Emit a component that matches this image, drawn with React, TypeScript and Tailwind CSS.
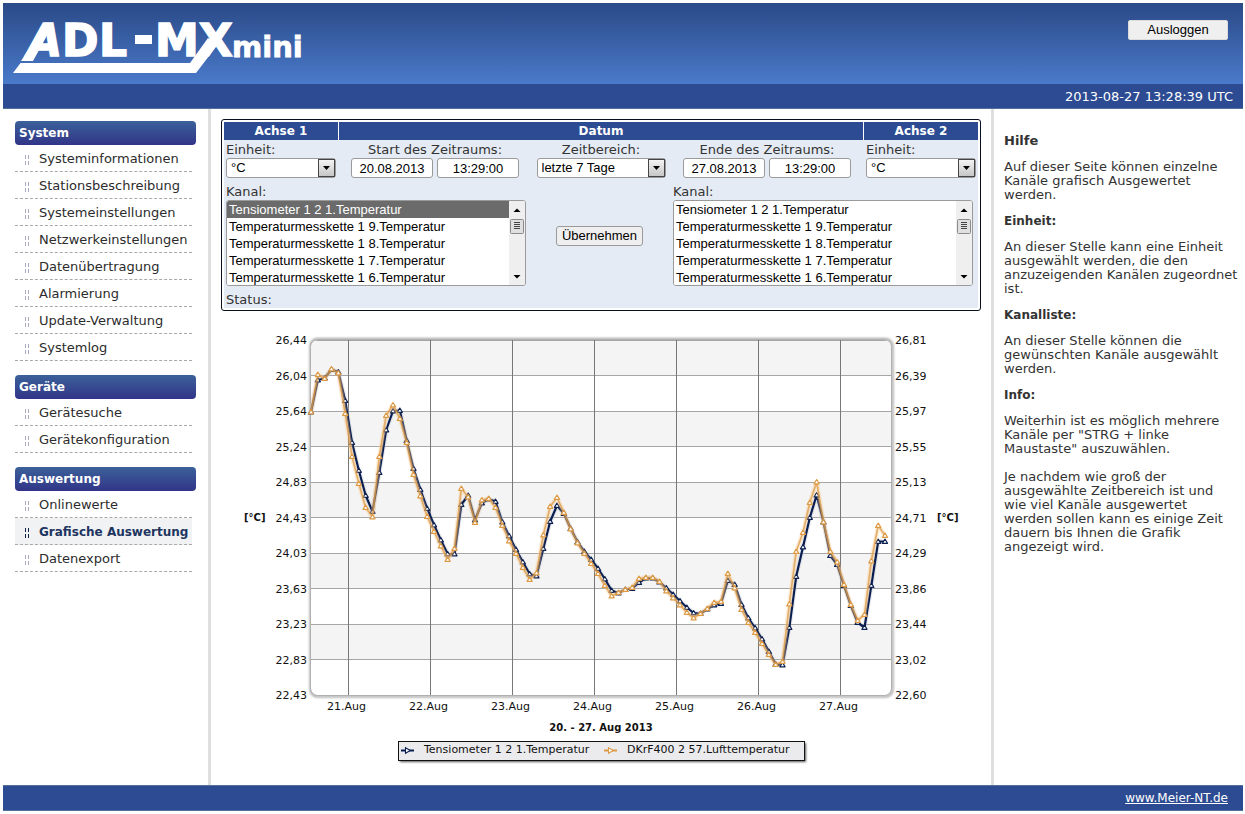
import React from "react";

const menu = [
  {
    title: "System",
    items: [
      "Systeminformationen",
      "Stationsbeschreibung",
      "Systemeinstellungen",
      "Netzwerkeinstellungen",
      "Datenübertragung",
      "Alarmierung",
      "Update-Verwaltung",
      "Systemlog",
    ],
  },
  { title: "Geräte", items: ["Gerätesuche", "Gerätekonfiguration"] },
  { title: "Auswertung", items: ["Onlinewerte", "Grafische Auswertung", "Datenexport"] },
];
const activeItem = "Grafische Auswertung";

const channels = [
  "Tensiometer 1 2 1.Temperatur",
  "Temperaturmesskette 1 9.Temperatur",
  "Temperaturmesskette 1 8.Temperatur",
  "Temperaturmesskette 1 7.Temperatur",
  "Temperaturmesskette 1 6.Temperatur",
];

const leftTicks = ["26,44", "26,04", "25,64", "25,24", "24,83", "24,43", "24,03", "23,63", "23,23", "22,83", "22,43"];
const rightTicks = ["26,81", "26,39", "25,97", "25,55", "25,13", "24,71", "24,29", "23,86", "23,44", "23,02", "22,60"];
const days = ["21.Aug", "22.Aug", "23.Aug", "24.Aug", "25.Aug", "26.Aug", "27.Aug"];

// One sample every two hours, as plot heights.
const tensiometer = [
  412, 380, 378, 369.5, 372, 400.5, 442.5, 470.5, 495.5, 511.5, 472.5, 430, 411, 410.5, 440.5, 468.5, 489.5, 508.5,
  525, 540, 554, 554, 504.5, 495.5, 520, 503, 499, 501.5, 522, 536, 549.5, 562, 574, 576, 548.5, 521.5, 505.5, 513.5,
  528.5, 542, 551.5, 559.5, 568.5, 579, 590.5, 593, 589.5, 588.5, 582.5, 578, 578, 582, 588, 594.5, 601, 607.5, 613,
  613.5, 609, 605, 603.5, 580.5, 584.5, 604.5, 618, 628, 639, 651.5, 664, 665, 627.5, 576.5, 547, 517.5, 495, 522,
  555.5, 564.5, 585.5, 605.5, 622.5, 627.5, 585.5, 541.5, 541.5,
];
const luft = [
  412, 374.5, 378.5, 369, 373, 413.5, 456.5, 483.5, 507.5, 517, 456.5, 415.5, 405, 418.5, 442.5, 474.5, 496, 516.5,
  531.5, 546, 559.5, 548.5, 488.5, 497, 522.5, 500, 498.5, 507.5, 525.5, 541, 553.5, 567.5, 579.5, 573, 535, 506.5,
  497.5, 512.5, 529, 543, 553.5, 563.5, 573.5, 585.5, 596, 592.5, 589.5, 587.5, 578.5, 577.5, 577.5, 581.5, 591, 598,
  605, 612.5, 618, 613.5, 608.5, 602.5, 601.5, 573.5, 588, 609.5, 622.5, 632.5, 643.5, 654.5, 664.5, 661.5, 604,
  551.5, 532.5, 502.5, 482, 522, 551.5, 562, 584.5, 604.5, 620.5, 614.5, 561, 525.5, 535.5,
];

const plotX = (i: number) => 311 + (i * 574) / 84;
const tickY = (i: number) => 340 + i * 35.5;

interface SeriesProps {
  values: number[];
  color: string;
  halo: string;
  width: number;
  opacity: number;
}

function Series({ values, color, halo, width, opacity }: SeriesProps) {
  const points = values.map((y, i) => `${plotX(i)},${y}`).join(" ");
  return (
    <g fill="none" strokeLinejoin="round">
      <polyline points={points} stroke={halo} strokeWidth="4.5" strokeOpacity="0.35" />
      <polyline points={points} stroke={color} strokeWidth={width} strokeOpacity={opacity} />
      {values.map((y, i) => (
        <path key={i} d={`M${plotX(i)} ${y - 2.5}l2.6 4.4h-5.2z`} fill="#fff" stroke={color} strokeWidth="1.1" />
      ))}
    </g>
  );
}

function Chart() {
  return (
    <svg viewBox="231 325 740 450" className="w-[740px] max-w-full" role="img" aria-label="20. - 27. Aug 2013" fontFamily="'DejaVu Sans', sans-serif" fontSize="11" fill="#111">
      <defs>
        <clipPath id="plot">
          <rect x="311" y="340" width="580" height="355" rx="7" />
        </clipPath>
        <filter id="soft" x="-5%" y="-20%" width="110%" height="140%">
          <feGaussianBlur stdDeviation="1.2" />
        </filter>
      </defs>
      <rect x="310.5" y="339" width="582" height="357.500" rx="7" fill="#fff" stroke="#9c9c9c" strokeWidth="2" filter="url(#soft)" />
      <g clipPath="url(#plot)">
        <rect x="311" y="340" width="580" height="355" fill="#fff" />
        {[0, 2, 4, 6, 8].map((i) => (
          <rect key={i} x="311" y={tickY(i)} width="580" height="35.5" fill="#f4f4f4" />
        ))}
        {leftTicks.map((t, i) => (
          <line key={t} x1="311" x2="891" y1={Math.floor(tickY(i)) + 0.5} y2={Math.floor(tickY(i)) + 0.5} stroke="#a6a6a6" />
        ))}
        {days.map((d, i) => (
          <line key={d} x1={348.5 + i * 82} x2={348.5 + i * 82} y1="340" y2="695" stroke="#777" />
        ))}
      </g>
      <rect x="310.5" y="339.5" width="581" height="356" rx="7" fill="none" stroke="#b0b0b0" />
      <Series values={tensiometer} color="#0b1e50" halo="#b9bfce" width={2.2} opacity={1} />
      <Series values={luft} color="#dc9a45" halo="#f8c98a" width={1.7} opacity={0.75} />
      {leftTicks.map((t, i) => (
        <text key={t} x="307" y={tickY(i) + 4} textAnchor="end">{t}</text>
      ))}
      {rightTicks.map((t, i) => (
        <text key={t} x="895" y={tickY(i) + 4}>{t}</text>
      ))}
      {days.map((d, i) => (
        <text key={d} x={346.5 + i * 82} y="710" textAnchor="middle">{d}</text>
      ))}
      <g fontWeight="700" fontSize="10">
        <text x="244" y="521">[°C]</text>
        <text x="937" y="521">[°C]</text>
        <text x="601" y="731" textAnchor="middle">20. - 27. Aug 2013</text>
      </g>
      <rect x="400" y="743" width="406" height="19" fill="#555" filter="url(#soft)" />
      <rect x="398.5" y="741.5" width="406" height="19" fill="#ebebed" stroke="#111" />
      <path d="M401 750.5h13" stroke="#0b1e50" strokeWidth="2" />
      <path d="M405.500 747.700l4.800 2.800l-4.800 2.800z" fill="#fff" stroke="#0b1e50" strokeWidth="1.100" />
      <path d="M604 750.5h13" stroke="#dc9a45" strokeWidth="2" />
      <path d="M608.500 747.700l4.800 2.800l-4.800 2.800z" fill="#fff" stroke="#dc9a45" strokeWidth="1.100" />
      <text x="424" y="753">Tensiometer 1 2 1.Temperatur</text>
      <text x="627" y="753">DKrF400 2 57.Lufttemperatur</text>
    </svg>
  );
}

function Logo() {
  return (
    <svg width="300" height="81" viewBox="10 3 300 81" role="img" aria-label="ADL-MX mini" fill="#fff" fontFamily="'DejaVu Sans', sans-serif" fontWeight="700">
      <path d="M13 73L20.500 63H190L208 38L219 43L196 73Z" />
      <path d="M21 61L43 27L49 32L33 61Z" />
      <rect x="135" y="35" width="17" height="9" />
      <g fontSize="44" stroke="#fff" strokeWidth="1.500">
        <text x="28" y="56" fontStyle="oblique">A</text>
        <text x="62" y="56">D</text>
        <text x="99" y="56">L</text>
        <text x="155" y="56">MX</text>
      </g>
      <text x="232" y="57" fontSize="29" stroke="#fff" strokeWidth="0.800">mini</text>
    </svg>
  );
}

function Dropdown({ id, options }: { id: string; options: string[] }) {
  return (
    <div className="relative">
      <select id={id} className="block h-5 w-full appearance-none rounded-[3px] border border-[#9a9a9a] bg-white pl-1 font-['Liberation_Sans',sans-serif] text-[13px] leading-4 text-black">
        {options.map((o) => (
          <option key={o}>{o}</option>
        ))}
      </select>
      <span className="pointer-events-none absolute top-px right-px flex h-[18px] w-[17px] items-center justify-center border border-[#444] bg-gradient-to-b from-[#f4f4f4] to-[#c6c6c6]">
        <svg width="7" height="4" viewBox="0 0 7 4">
          <path d="M0 0H7L3.5 4Z" />
        </svg>
      </span>
    </div>
  );
}

function TimeInput({ label, value }: { label: string; value: string }) {
  return (
    <input
      aria-label={label}
      defaultValue={value}
      className="h-5 w-[82px] rounded-[3px] border border-[#9a9a9a] bg-white text-center font-['Liberation_Sans',sans-serif] text-[13px] text-black"
    />
  );
}

function Period({ title, date, time }: { title: string; date: string; time: string }) {
  return (
    <fieldset className="text-center">
      <legend className="mx-auto leading-[17px]">{title}:</legend>
      <div className="flex gap-1">
        <TimeInput label={`${title} Datum`} value={date} />
        <TimeInput label={`${title} Uhrzeit`} value={time} />
      </div>
    </fieldset>
  );
}

function ChannelList({ id, selected }: { id: string; selected: string[] }) {
  return (
    <div className="w-[300px]">
      <label htmlFor={id} className="block h-[17px] leading-[17px]">Kanal:</label>
      <div className="flex h-[86px] overflow-hidden rounded-[3px] border border-[#9a9a9a] bg-white">
        <select
          id={id}
          multiple
          size={5}
          defaultValue={selected}
          className="h-[85px] min-w-0 flex-1 overflow-hidden bg-white p-0 font-['Liberation_Sans',sans-serif] text-[13px] text-black [scrollbar-width:none]"
        >
          {channels.map((c) => (
            <option
              key={c}
              className="h-[17px] px-[2px] pt-px pb-0 leading-[16px] checked:bg-[linear-gradient(#6b6b6b,#6b6b6b)] checked:[-webkit-text-fill-color:#fff]"
            >
              {c}
            </option>
          ))}
        </select>
        <div aria-hidden="true" className="flex w-4 flex-col items-center justify-between bg-[#efefef]">
          <svg width="16" height="34" viewBox="0 0 16 34">
            <path d="M4.500 11H11.500L8 7.500Z" />
            <rect x="1.500" y="18.500" width="13" height="14" rx="1" fill="#e0e0e0" stroke="#8a8a8a" />
            <path d="M5 21.500H11M5 23.500H11M5 25.500H11M5 27.500H11" stroke="#444" />
          </svg>
          <svg width="16" height="14" viewBox="0 0 16 14">
            <path d="M4.500 4H11.500L8 7.500Z" />
          </svg>
        </div>
      </div>
    </div>
  );
}

function ControlPanel() {
  return (
    <form className="rounded-[3px] border border-[#06101f] bg-white p-[2px] text-[#333]" onSubmit={(e) => e.preventDefault()}>
      <div className="grid grid-cols-[114px_1fr_114px] gap-x-px text-center text-[12px] leading-[18px] font-bold text-white">
        <h2 className="bg-[#2c4b92]">Achse 1</h2>
        <h2 className="bg-[#2c4b92]">Datum</h2>
        <h2 className="bg-[#2c4b92]">Achse 2</h2>
      </div>
      <div className="bg-[#e5ebf4] pt-px">
        <div className="grid grid-cols-[114px_1fr_114px] gap-x-px">
          <div className="px-[2px]">
            <label htmlFor="unit1" className="block leading-[17px]">Einheit:</label>
            <Dropdown id="unit1" options={["°C", "%"]} />
          </div>
          <div className="flex justify-between px-[12px]">
            <Period title="Start des Zeitraums" date="20.08.2013" time="13:29:00" />
            <div className="w-[129px] text-center">
              <label htmlFor="range" className="block leading-[17px]">Zeitbereich:</label>
              <Dropdown id="range" options={["letzte 7 Tage", "letzte 24 Stunden"]} />
            </div>
            <Period title="Ende des Zeitraums" date="27.08.2013" time="13:29:00" />
          </div>
          <div className="px-[2px]">
            <label htmlFor="unit2" className="block leading-[17px]">Einheit:</label>
            <Dropdown id="unit2" options={["°C", "%"]} />
          </div>
        </div>
        <div className="mt-[5px] flex items-center justify-between pr-[5px] pl-[2px]">
          <ChannelList id="channels1" selected={[channels[0]]} />
          <button className="mt-[3px] h-5 rounded-[3px] border border-[#9a9a9a] bg-[#efefef] px-[5px] font-['Liberation_Sans',sans-serif] text-[13px] leading-4 text-black">
            Übernehmen
          </button>
          <ChannelList id="channels2" selected={[]} />
        </div>
        <p className="mt-[5px] pl-[2px] leading-[17px]">Status:</p>
      </div>
    </form>
  );
}

function Sidebar() {
  return (
    <nav className="flex w-[205px] shrink-0 flex-col gap-[14px] pt-3 pl-3">
      {menu.map((section) => (
        <section key={section.title}>
          <h2 className="h-6 w-[181px] rounded-[4px] bg-gradient-to-b from-[#3b6199] to-[#323488] pl-1 text-[12px] leading-[24px] font-bold text-white">
            {section.title}
          </h2>
          <ul className="w-[177px]">
            {section.items.map((item) => {
              const active = item === activeItem;
              return (
                <li key={item} className={active ? "bg-[#f1f2f4]" : ""}>
                  <a
                    href="#"
                    className={
                      active
                        ? "flex h-[27px] items-center border-b border-dashed border-[#a9a9a9] pt-[2px] pl-[10px] text-[12px] font-bold whitespace-nowrap text-[#1d3560]"
                        : "flex h-[27px] items-center border-b border-dashed border-[#a9a9a9] pt-[2px] pl-[10px] whitespace-nowrap text-[#2c2c2c]"
                    }
                  >
                    <svg width="4" height="10" viewBox="0 0 4 10" className="mt-px mr-[10px] shrink-0">
                      <path d="M.5 0V4M3.5 0V4M.5 6V10M3.5 6V10" stroke={active ? "#10204a" : "#a9a9c0"} />
                    </svg>
                    {item}
                  </a>
                </li>
              );
            })}
          </ul>
        </section>
      ))}
    </nav>
  );
}

function Help() {
  return (
    <aside className="flex w-[252px] shrink-0 flex-col gap-3 border-l-[3px] border-[#dfdfdf] pt-[25px] pl-[10px] leading-[14px] text-[#333]">
      <h1 className="text-[13px] font-bold">Hilfe</h1>
      <p className="pr-2">Auf dieser Seite können einzelne Kanäle grafisch Ausgewertet werden.</p>
      <h2 className="text-[12px] font-bold">Einheit:</h2>
      <p>An dieser Stelle kann eine Einheit ausgewählt werden, die den anzuzeigenden Kanälen zugeordnet ist.</p>
      <h2 className="text-[12px] font-bold">Kanalliste:</h2>
      <p className="pr-2">An dieser Stelle können die gewünschten Kanäle ausgewählt werden.</p>
      <h2 className="text-[12px] font-bold">Info:</h2>
      <p className="pr-2">
        Weiterhin ist es möglich mehrere Kanäle per "STRG + linke Maustaste" auszuwählen.
        <br />
        <br />
        Je nachdem wie groß der ausgewählte Zeitbereich ist und wie viel Kanäle ausgewertet werden sollen kann es einige
        Zeit dauern bis Ihnen die Grafik angezeigt wird.
      </p>
    </aside>
  );
}

export default function App() {
  return (
    <div className="flex min-h-screen flex-col bg-white p-[3px] pr-[2px] font-['DejaVu_Sans',sans-serif] text-[13px]">
      <header>
        <div className="flex h-[81px] items-start justify-between bg-gradient-to-b from-[#2b4a88] to-[#4a7aca] pr-[15px] pl-[7px]">
          <Logo />
          <button className="mt-[17px] h-5 w-[100px] rounded-[2px] border border-[#dcdcdc] bg-[#efefef] font-['Liberation_Sans',sans-serif] text-[13px] leading-4 text-black">
            Ausloggen
          </button>
        </div>
        <div className="h-[25px] border-b border-[#54719c] bg-[#2c4b92] pr-[10px] text-right leading-[25px] text-white">
          2013-08-27 13:28:39 UTC
        </div>
      </header>
      <div className="flex flex-1">
        <Sidebar />
        <main className="flex min-w-0 flex-1 flex-col border-l-[3px] border-[#dfdfdf] px-[10px] pt-[10px]">
          <ControlPanel />
          <div className="mt-[14px] flex justify-center">
            <Chart />
          </div>
        </main>
        <Help />
      </div>
      <footer className="h-[26px] border-y border-[#54719c] bg-[#2c4b92] pr-[15px] text-right text-[12px] leading-[24px] text-white">
        <a href="#" className="underline">www.Meier-NT.de</a>
      </footer>
    </div>
  );
}
